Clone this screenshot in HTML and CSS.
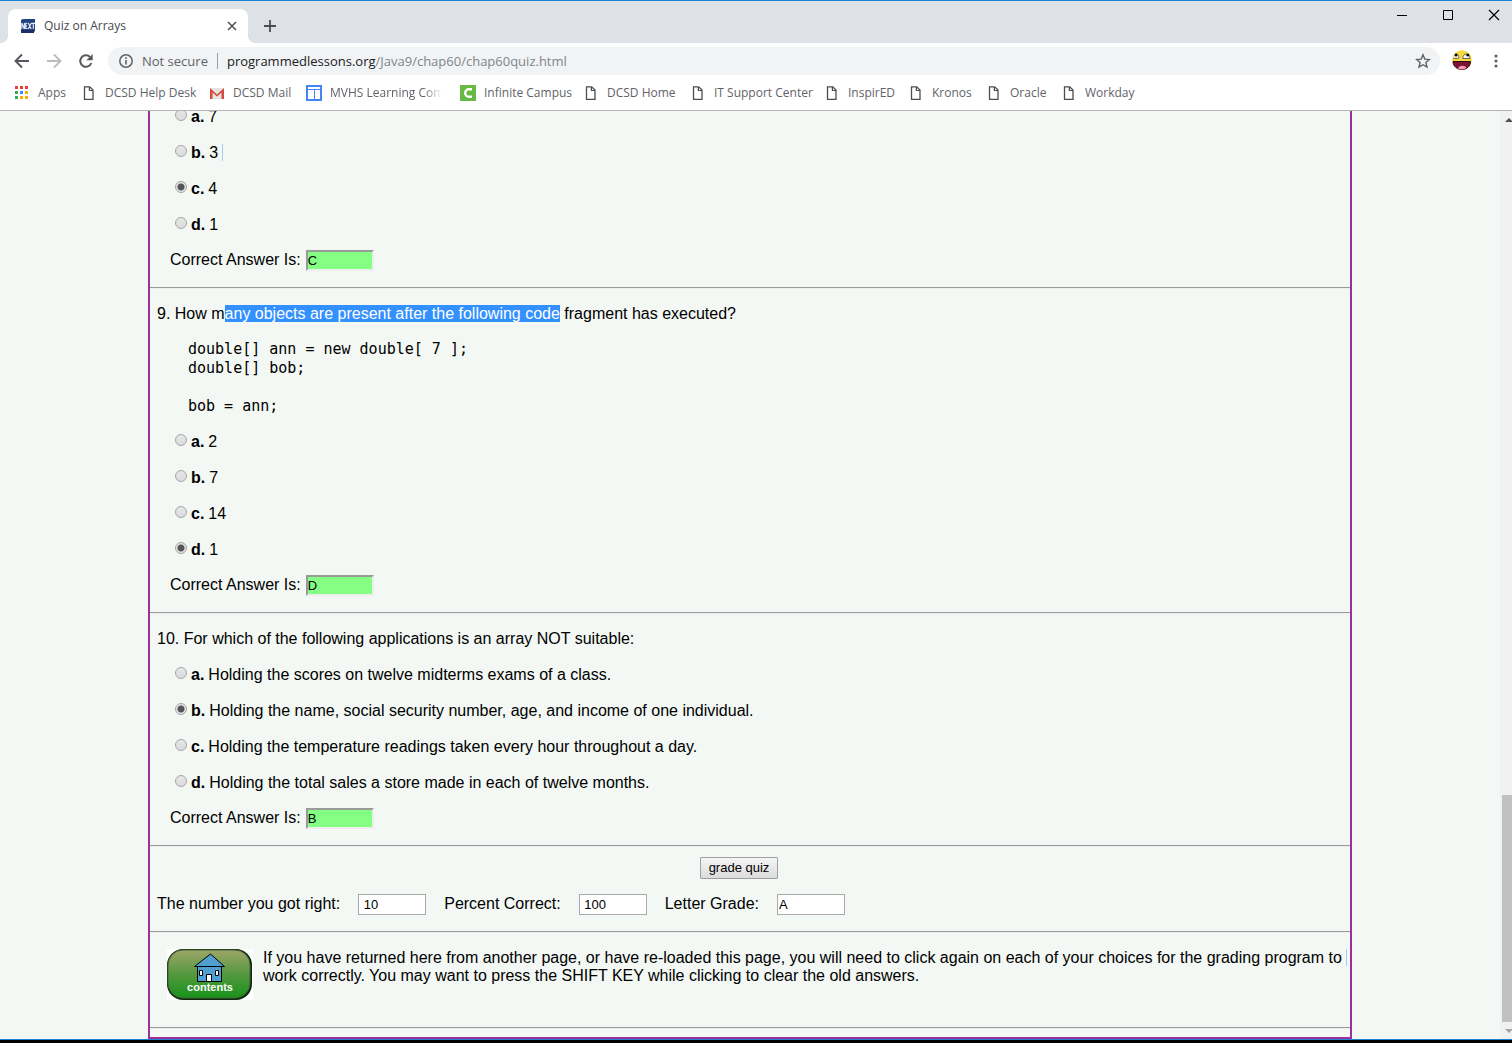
FILE: index.html
```html
<!DOCTYPE html>
<html lang="en">
<head>
<meta charset="utf-8">
<title>Quiz on Arrays</title>
<link rel="stylesheet" href="styles.css">
</head>
<body>
<svg class="defs" aria-hidden="true">
  <symbol id="doc" viewBox="0 0 16 16"><path d="M3.500 1.800h5.200l3.300 3.300v9.200H3.500z" fill="#fff" stroke="#4a4d51" stroke-width="1.300"/><path d="M8.400 2v3.500h3.500" fill="none" stroke="#4a4d51" stroke-width="1.200"/></symbol>
</svg>
<div class="browser">
  <header>
    <div class="titlebar">
      <div class="tab">
        <svg class="icon16" viewBox="0 0 16 16"><path d="M1 2L3 1h12v12l-2 2H1z" fill="#23437f"/><path d="M1 12h13v3H1z" fill="#1b2f66"/><path d="M1.800 11V5l2.600 6V5M7.500 5.200H5.700v5.300h1.800M5.700 8h1.600M8.300 5l3 6M11.300 5l-3 6M11.500 5.400H15M13.300 5.500V11" stroke="#e8eefc" stroke-width="1.100" fill="none"/></svg>
        <span class="tab-title">Quiz on Arrays</span>
        <button class="plain" aria-label="Close tab"><svg class="icon16" viewBox="0 0 16 16"><path d="M4 4l8 8M12 4l-8 8" stroke="#4a4d51" stroke-width="1.500"/></svg></button>
      </div>
      <button class="plain new-tab" aria-label="New tab"><svg class="icon16" viewBox="0 0 16 16"><path d="M8 2v12M2 8h12" stroke="#4a4d51" stroke-width="1.800"/></svg></button>
      <div class="window-controls">
        <button class="plain" aria-label="Minimize"><svg class="icon16" viewBox="0 0 16 16"><path d="M3 8.500h10" stroke="#000"/></svg></button>
        <button class="plain" aria-label="Maximize"><svg class="icon16" viewBox="0 0 16 16"><path d="M3.500 3.500h9v9h-9z" stroke="#000" fill="none"/></svg></button>
        <button class="plain" aria-label="Close"><svg class="icon16" viewBox="0 0 16 16"><path d="M3 3l10 10M13 3L3 13" stroke="#000" stroke-width="1.200"/></svg></button>
      </div>
    </div>
    <div class="toolbar">
      <button class="plain" aria-label="Back"><svg class="icon16" viewBox="0 0 16 16"><path d="M15 8H2M8 1.500L1.500 8 8 14.500" fill="none" stroke="#54575b" stroke-width="1.900"/></svg></button>
      <button class="plain" aria-label="Forward"><svg class="icon16" viewBox="0 0 16 16"><path d="M1 8h13M8 1.500L14.500 8 8 14.500" fill="none" stroke="#babcbe" stroke-width="1.900"/></svg></button>
      <button class="plain" aria-label="Reload"><svg class="icon16" viewBox="0 0 16 16"><path d="M13.300 10A5.700 5.700 0 1 1 12 4" fill="none" stroke="#54575b" stroke-width="2"/><path d="M14.700 1v6.300H8.400z" fill="#54575b"/></svg></button>
      <div class="omnibox">
        <svg class="icon16" viewBox="0 0 16 16"><circle cx="8" cy="8" r="6.200" fill="none" stroke="#5f6368" stroke-width="1.500"/><path d="M8 7v4.500M8 4.300v1.600" stroke="#5f6368" stroke-width="1.600"/></svg>
        <span class="security">Not secure</span>
        <span class="url"><b>programmedlessons.org</b>/Java9/chap60/chap60quiz.html</span>
        <button class="plain" aria-label="Bookmark this page"><svg class="icon16" viewBox="0 0 16 16"><path d="M8 1.800l1.800 4.300 4.600.4-3.500 3 1.100 4.600L8 11.700l-4 2.400 1.100-4.600-3.500-3 4.600-.4z" fill="none" stroke="#5f6368" stroke-width="1.400"/></svg></button>
      </div>
      <button class="plain profile" aria-label="Profile"><svg viewBox="0 0 20 20" width="20" height="20"><circle cx="10" cy="10" r="9.800" fill="#f7d93f"/><path d="M1 11.500h17.500c0 5-4 8-8.500 8s-9-3-9-8z" fill="#7d1236" stroke="#2b1018"/><path d="M6 18.500c1-3.500 7-3.500 8.500-.5-2.500 1.600-5.500 2-8.500.5z" fill="#f596b8"/><path d="M1 8.300h5.500c1-3-1-4.500-3-4.500M10.800 8.500c0-6 7-6 7.200 0z" fill="#fff" stroke="#444" stroke-width=".8"/><circle cx="4" cy="5.200" r="1.400"/><circle cx="15.800" cy="5.200" r="1.400"/></svg></button>
      <button class="plain" aria-label="Menu"><svg class="icon16" viewBox="0 0 16 16"><g fill="#5f6368"><circle cx="8" cy="3" r="1.600"/><circle cx="8" cy="8" r="1.600"/><circle cx="8" cy="13" r="1.600"/></g></svg></button>
    </div>
    <nav class="bookmarks">
      <a href="#"><svg class="icon16" viewBox="0 0 16 16"><path d="M1 1h3v3H1zM6 1h3v3H6zM11 1h3v3h-3z" fill="#ea4335"/><path d="M1 6h3v3H1zM1 11h3v3H1z" fill="#34a853"/><path d="M6 6h3v3H6z" fill="#4285f4"/><path d="M11 6h3v3h-3zM6 11h3v3H6zM11 11h3v3h-3z" fill="#f9ab00"/></svg>Apps</a>
      <a href="#"><svg class="icon16"><use href="#doc"/></svg>DCSD Help Desk</a>
      <a href="#"><svg class="icon16" viewBox="0 0 16 16"><path d="M1 3h14v11H1z" fill="#e6e4e3"/><path d="M1 14V3l7 6.500L15 3v11h-2.500V7.500L8 11.500 3.500 7.500V14z" fill="#d54b3d"/></svg>DCSD Mail</a>
      <a href="#"><svg class="icon16" viewBox="0 0 16 16"><path d="M1 1h14v14H1z" fill="#fff" stroke="#4285f4" stroke-width="2"/><path d="M1 4.500h14M8.500 5v10" stroke="#4285f4"/></svg><span class="faded">MVHS Learning Commons</span></a>
      <a href="#"><svg class="icon16" viewBox="0 0 16 16"><path d="M0 0h16v16H0z" fill="#66b945"/><path d="M12 4.200H9a3.800 3.800 0 0 0 0 7.600h3" fill="none" stroke="#fff" stroke-width="2.400"/></svg>Infinite Campus</a>
      <a href="#"><svg class="icon16"><use href="#doc"/></svg>DCSD Home</a>
      <a href="#"><svg class="icon16"><use href="#doc"/></svg>IT Support Center</a>
      <a href="#"><svg class="icon16"><use href="#doc"/></svg>InspirED</a>
      <a href="#"><svg class="icon16"><use href="#doc"/></svg>Kronos</a>
      <a href="#"><svg class="icon16"><use href="#doc"/></svg>Oracle</a>
      <a href="#"><svg class="icon16"><use href="#doc"/></svg>Workday</a>
    </nav>
  </header>
  <div class="viewport">
    <div class="page">
      <main class="quiz">
        <section class="question first">
          <div class="choices">
            <label><input type="radio" name="q8"><b>a.</b> 7</label>
            <label><input type="radio" name="q8"><b>b.</b> 3<i class="mark"></i></label>
            <label><input type="radio" name="q8" checked><b>c.</b> 4</label>
            <label><input type="radio" name="q8"><b>d.</b> 1</label>
          </div>
          <label class="answer">Correct Answer Is: <input type="text" value="C"></label>
        </section>
        <hr>
        <section class="question">
          <p>9. How m<span class="selected">any objects are present after the following code</span> fragment has executed?</p>
          <pre>double[] ann = new double[ 7 ];
double[] bob;

bob = ann;</pre>
          <div class="choices">
            <label><input type="radio" name="q9"><b>a.</b> 2</label>
            <label><input type="radio" name="q9"><b>b.</b> 7</label>
            <label><input type="radio" name="q9"><b>c.</b> 14</label>
            <label><input type="radio" name="q9" checked><b>d.</b> 1</label>
          </div>
          <label class="answer">Correct Answer Is: <input type="text" value="D"></label>
        </section>
        <hr>
        <section class="question">
          <p>10. For which of the following applications is an array NOT suitable:</p>
          <div class="choices">
            <label><input type="radio" name="q10"><b>a.</b> Holding the scores on twelve midterms exams of a class.</label>
            <label><input type="radio" name="q10" checked><b>b.</b> Holding the name, social security number, age, and income of one individual.</label>
            <label><input type="radio" name="q10"><b>c.</b> Holding the temperature readings taken every hour throughout a day.</label>
            <label><input type="radio" name="q10"><b>d.</b> Holding the total sales a store made in each of twelve months.</label>
          </div>
          <label class="answer">Correct Answer Is: <input type="text" value="B"></label>
        </section>
        <hr>
        <section class="grading">
          <button class="grade">grade quiz</button>
          <div class="results">
            <label>The number you got right: <input type="text" value=" 10"></label>
            <label>Percent Correct: <input type="text" value=" 100"></label>
            <label>Letter Grade: <input type="text" value="A"></label>
          </div>
        </section>
        <hr>
        <section class="note">
          <a href="#" class="contents">
            <svg viewBox="0 0 86 51" width="86" height="51">
              <defs><linearGradient id="g" x1="0" y1="0" x2="0" y2="1"><stop offset="0" stop-color="#9da568"/><stop offset=".5" stop-color="#55983f"/><stop offset="1" stop-color="#169319"/></linearGradient></defs>
              <path d="M0 0h86v51H0z" fill="#fff"/>
              <rect x="0" y="0" width="85" height="51" rx="16" fill="#0c2b0c"/>
              <rect x="1" y="1" width="82" height="48" rx="15" fill="url(#g)" stroke="#48603b"/>
              <path d="M30.500 17.500h24v15h-24z" fill="#4f9fd0" stroke="#000"/>
              <path d="M27.500 17.500L43.500 5l14 12.500z" fill="#4f9fd0" stroke="#000"/>
              <path d="M32.500 21.500h3v5h-3zM48.500 21.500h3v5h-3zM39.500 25.500h5v7h-5z" fill="#fff" stroke="#000"/>
              <text x="43" y="42" text-anchor="middle" class="contents-label">contents</text>
            </svg>
          </a>
          <p>If you have returned here from another page, or have re-loaded this page, you will need to click again on each of your choices for the grading program to work correctly. You may want to press the SHIFT KEY while clicking to clear the old answers.</p>
          <i class="mark line-end"></i>
        </section>
        <hr>
      </main>
    </div>
    <div class="scrollbar">
      <svg width="12" height="17" viewBox="0 0 12 17"><path d="M5 11l4-4 4 4z" fill="#505050"/></svg>
      <div class="thumb"></div>
      <svg width="12" height="17" viewBox="0 0 12 17"><path d="M5 7l4 4 4-4z" fill="#a3a3a3"/></svg>
    </div>
  </div>
</div>
</body>
</html>
```
FILE: styles.css
```css
* { box-sizing: border-box; }

body {
  margin: 0;
  background: #000;
  font: 16px/18px "Liberation Sans", Arial, sans-serif;
  color: #000;
}

.defs { position: absolute; width: 0; height: 0; }
.icon16 { display: block; width: 16px; height: 16px; flex: none; }

.browser {
  display: flex;
  flex-direction: column;
  height: calc(100vh - 3px);
  background: #fff;
  border-top: 1px solid #1a83d8;
  border-bottom: 1px solid #1a83d8;
}

header {
  flex: none;
  font: 12px/16px "Open Sans", "Noto Sans", sans-serif;
  color: #5f6368;
  border-bottom: 1px solid #b4b4b4;
}

.plain { border: 0; padding: 0; background: none; display: block; }

.titlebar {
  display: flex;
  align-items: flex-start;
  height: 42px;
  padding-left: 8px;
  background: #dee1e6;
}
.tab {
  position: relative;
  display: flex;
  align-items: center;
  gap: 8px;
  width: 240px;
  height: 34px;
  margin-top: 8px;
  padding: 0 8px 0 12px;
  border-radius: 8px 8px 0 0;
  background: #fff;
  color: #45494d;
}
.tab::before,
.tab::after {
  content: "";
  position: absolute;
  bottom: 0;
  width: 8px;
  height: 8px;
}
.tab::before { left: -8px; background: radial-gradient(circle at 0 0, #dee1e6 8px, #fff 8px); }
.tab::after { right: -8px; background: radial-gradient(circle at 100% 0, #dee1e6 8px, #fff 8px); }
.tab-title { flex: 1; }
.new-tab { margin: 17px 0 0 14px; }
.window-controls { display: flex; gap: 30px; margin: 6px 10px 0 auto; }

.toolbar {
  display: flex;
  align-items: center;
  gap: 16px;
  height: 36px;
  padding: 0 8px 0 14px;
}
.omnibox {
  display: flex;
  align-items: center;
  flex: 1;
  height: 28px;
  margin-left: -2px;
  margin-right: -4px;
  padding: 0 9px 0 10px;
  border-radius: 14px;
  background: #f1f3f4;
  font-size: 13px;
}
.security {
  margin: 0 9px 0 8px;
  padding-right: 9px;
  border-right: 1px solid #9aa0a6;
}
.url { flex: 1; color: #80868b; }
.url b { font-weight: 400; color: #202124; }

.bookmarks {
  display: grid;
  grid-template-columns: 67px 128px 97px 154px 123px 107px 134px 84px 78px 75px auto;
  height: 31px;
  padding: 6px 14px 0;
}
.bookmarks a {
  display: flex;
  gap: 8px;
  height: 16px;
  color: inherit;
  text-decoration: none;
  white-space: nowrap;
}
.faded {
  width: 114px;
  overflow: hidden;
  mask-image: linear-gradient(to right, #000 94px, transparent 112px);
}

.viewport {
  display: flex;
  flex: 1;
  min-height: 0;
  overflow: hidden;
  background: #f3f8f4;
}
.page { flex: 1; }
.quiz {
  box-sizing: content-box;
  width: 80%;
  margin: -3px auto 0;
  padding-bottom: 8px;
  border: 2px solid #9b309b;
  border-top: 0;
}
.scrollbar {
  display: flex;
  flex-direction: column;
  justify-content: space-between;
  width: 12px;
  background: #f1f1f1;
}
.thumb { height: 227px; margin: auto 0 0 2px; background: #c1c1c1; }

hr {
  height: 2px;
  margin: 0;
  border: 0;
  border-top: 1px solid #9a9a9a;
  border-bottom: 1px solid #eee;
}
p { margin: 0; }

.question { padding: 16px 7px; }
.question.first { padding-top: 0; }
.question p { margin-bottom: 18px; }
pre {
  margin: -1px 0 17px 31px;
  font: 15px/19px "DejaVu Sans Mono", monospace;
}
.choices {
  display: flex;
  flex-direction: column;
  gap: 18px;
  padding-left: 18px;
}
.choices label { display: flex; gap: 4px; }

input[type="radio"] {
  appearance: none;
  width: 12px;
  height: 12px;
  margin: 1px 0 0;
  border: 1px solid #a6a6a6;
  border-radius: 50%;
  background: linear-gradient(#e6e6e6, #dcdcdc);
}
input[type="radio"]:checked {
  background: radial-gradient(circle, #555 3px, #e4e4e4 4px);
}
.mark { width: 1px; height: 17px; background: #a8cbf0; }

input[type="text"] {
  width: 68px;
  height: 21px;
  padding: 0 1px;
  border: 1px solid #a9a9a9;
  border-radius: 0;
  background: #fff;
  font: 13px/17px "Liberation Sans", Arial, sans-serif;
  color: #000;
}
.answer {
  display: flex;
  gap: 5px;
  margin: 16px 0 0 13px;
  line-height: 20px;
}
.answer input[type="text"] {
  height: 21px;
  padding: 0;
  border: 2px solid;
  border-color: #9a9a9a #eee #eee #9a9a9a;
  background: #84ff84;
}
.selected { background: #3390ff; color: #fff; }

.grading { padding: 10px 7px 16px; }
.grade {
  display: block;
  height: 22px;
  margin: 0 auto 15px;
  padding: 0 8px;
  position: relative;
  right: 11px;
  border: 1px solid #a0a0a0;
  border-radius: 1px;
  background: linear-gradient(#f4f4f4, #dcdcdc);
  font: 13px/18px "Liberation Sans", Arial, sans-serif;
  color: #000;
}
.results { display: flex; gap: 18px; line-height: 20px; }
.results label { display: flex; gap: 18px; }

.note {
  position: relative;
  display: flex;
  gap: 10px;
  min-height: 94px;
  padding: 16px 7px 0 17px;
}
.contents { flex: none; height: 51px; }
.contents svg { display: block; }
.contents-label {
  font: bold 11px "Liberation Sans", Arial, sans-serif;
  fill: #fff;
}
.line-end { position: absolute; top: 16px; right: 3px; }
```
